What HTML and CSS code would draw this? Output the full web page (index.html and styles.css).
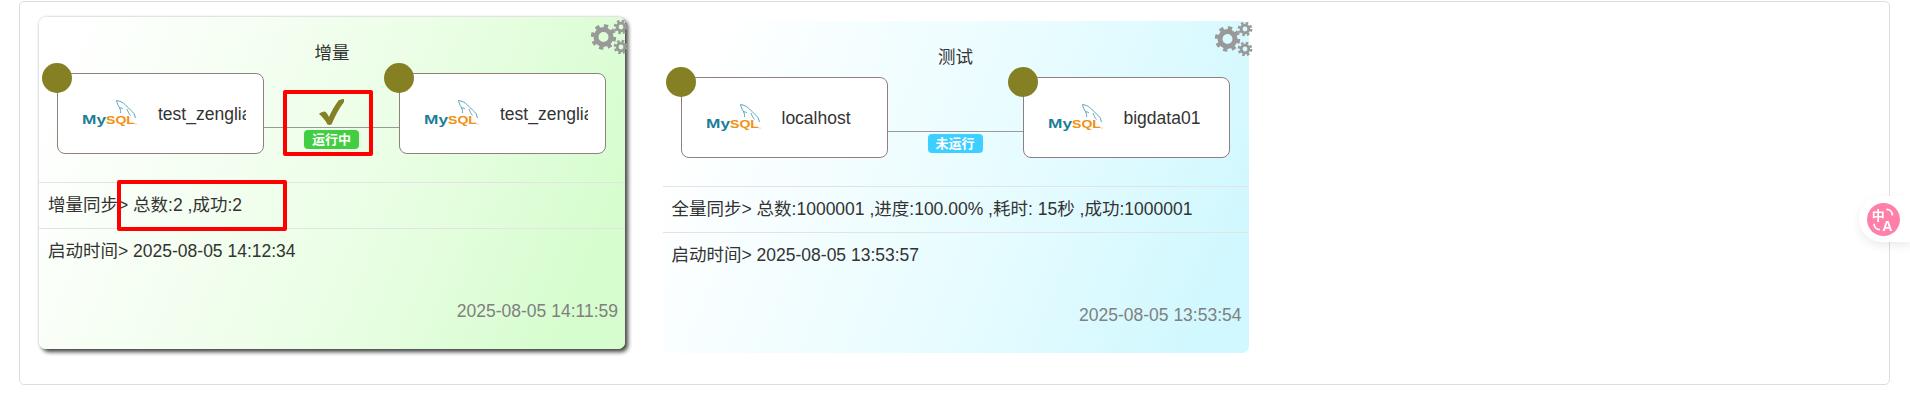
FILE: index.html
```html
<!DOCTYPE html>
<html lang="zh">
<head>
<meta charset="utf-8">
<title>任务</title>
<link rel="stylesheet" href="styles.css">
</head>
<body>
<svg class="defs" width="0" height="0" aria-hidden="true">
  <defs>
    <symbol id="mysql" viewBox="0 0 55 30">
      <path d="M34.500 1.500C35 4 36 6.500 37.500 8.500C38.500 10.500 38.700 12 38.500 14M34.500 1.500C38 2 41 3.500 43.500 6C45.500 8 47 9.500 48.500 11C50 12.500 51 13 52 14.500C52.500 16 53 17.500 53.500 19M45 10C46 12.500 47 15 48.500 16.500M37 9C38.500 8.500 40 9 41 10" fill="none" stroke="#4c9cb3" stroke-width=".9"/>
      <text class="logo-my" x="0" y="25" textLength="24" lengthAdjust="spacingAndGlyphs">My</text>
      <text class="logo-sql" x="24" y="25" textLength="29" lengthAdjust="spacingAndGlyphs">SQL</text>
      <circle cx="54" cy="25" r=".6" fill="#f29111"/>
    </symbol>
    <symbol id="cogs" viewBox="0 0 38 34">
      <g fill="none" stroke="#999">
        <circle cx="12.500" cy="17" r="7.500" stroke-width="5"/>
        <circle cx="12.500" cy="17" r="11" stroke-width="3.500" stroke-dasharray="4.300 4.340"/>
        <circle cx="30" cy="7" r="3.800" stroke-width="2.800"/>
        <circle cx="30" cy="7" r="6" stroke-width="2.600" stroke-dasharray="2.500 2.210"/>
        <circle cx="30" cy="27" r="3.800" stroke-width="2.800"/>
        <circle cx="30" cy="27" r="6" stroke-width="2.600" stroke-dasharray="2.500 2.210"/>
      </g>
    </symbol>
  </defs>
</svg>

<main class="panel">
  <section class="card card-green">
    <svg class="cogs"><use href="#cogs"/></svg>
    <h3 class="title">增量</h3>
    <div class="flow">
      <div class="node">
        <span class="dot"></span>
        <svg class="logo"><use href="#mysql"/></svg>
        <span class="name">test_zenglia</span>
      </div>
      <div class="link">
        <div class="link-top">
          <svg class="check" viewBox="0 0 25 26"><path d="M0 15C1.500 13.500 3.500 12.500 6 12.500C7.500 13.500 9 15.500 10 18C12.500 12 16 6 19.500 1.500C21 .5 23.500 0 25 0C25.500 1 25.500 2 25 3C20.500 9 16 17 12.500 25.500C11.500 26 9.500 26 8.500 25.500C6.500 21.500 3.500 18 0 15Z" fill="#858024"/></svg>
        </div>
        <span class="badge badge-run">运行中</span>
      </div>
      <div class="node">
        <span class="dot"></span>
        <svg class="logo"><use href="#mysql"/></svg>
        <span class="name">test_zenglia</span>
      </div>
    </div>
    <div class="row">增量同步&gt; 总数:2 ,成功:2</div>
    <div class="row">启动时间&gt; 2025-08-05 14:12:34</div>
    <div class="stamp">2025-08-05 14:11:59</div>
    <span class="mark mark-link"></span>
    <span class="mark mark-stat"></span>
  </section>

  <section class="card card-blue">
    <svg class="cogs"><use href="#cogs"/></svg>
    <h3 class="title">测试</h3>
    <div class="flow">
      <div class="node">
        <span class="dot"></span>
        <svg class="logo"><use href="#mysql"/></svg>
        <span class="name">localhost</span>
      </div>
      <div class="link">
        <div class="link-top"></div>
        <span class="badge badge-idle">未运行</span>
      </div>
      <div class="node">
        <span class="dot"></span>
        <svg class="logo"><use href="#mysql"/></svg>
        <span class="name">bigdata01</span>
      </div>
    </div>
    <div class="row">全量同步&gt; 总数:1000001 ,进度:100.00% ,耗时: 15秒 ,成功:1000001</div>
    <div class="row">启动时间&gt; 2025-08-05 13:53:57</div>
    <div class="stamp">2025-08-05 13:53:54</div>
  </section>
</main>

<aside class="translate">
  <svg class="translate-icon" viewBox="0 0 28 28">
    <circle cx="14" cy="14" r="14" fill="#ff80a9"/>
    <text class="t-zh" x="4" y="14.500">中</text>
    <text class="t-en" x="13" y="23.500">A</text>
    <path d="M16.500 5.500C19.500 5.500 21.500 7.500 21.500 10.500M6 17.500C6 20.500 8 22.500 11 22.500" fill="none" stroke="#fff" stroke-width="1.500"/>
  </svg>
</aside>
</body>
</html>
```
FILE: styles.css
```css
* { box-sizing: border-box; }
html, body { margin: 0; background: #fff; }
body {
  padding: 1px 20px 0 19px;
  height: 409px;
  overflow: hidden;
  font-family: "Liberation Sans", "Noto Sans CJK SC", sans-serif;
  font-size: 17.5px;
  color: #333;
}
.defs { position: absolute; }

.panel {
  display: flex;
  gap: 37.5px;
  height: 384px;
  padding: 19px;
  border: 1px solid #ddd;
  border-radius: 5px;
}

.card {
  position: relative;
  width: 586px;
  height: 332px;
  border-radius: 7px;
}
.card-green {
  transform: translateY(-4px);
  background: linear-gradient(112deg, #fff 5%, #ebfee6 55%, #d5fdcd 93%);
  box-shadow: 3px 3px 4px #444, 0 0 3px #ccc;
}
.card-blue {
  background: linear-gradient(112deg, #fff 8%, #e8fcff 55%, #d0f8fe 93%);
}

.cogs {
  position: absolute;
  top: 3px;
  left: 552px;
  width: 38px;
  height: 34px;
}
.card-blue .cogs { top: 1px; }

.title {
  height: 56px;
  margin: 0;
  padding-top: 24px;
  font-size: 17.5px;
  font-weight: 400;
  line-height: 24px;
  text-align: center;
}

.flow {
  display: flex;
  height: 81px;
  padding: 0 19px 0 18px;
}
.node {
  position: relative;
  display: flex;
  flex: none;
  align-items: center;
  gap: 21px;
  width: 207px;
  padding-left: 24px;
  background: #fff;
  border: 1px solid #917f7f;
  border-radius: 8px;
}
.dot {
  position: absolute;
  top: -11px;
  left: -16px;
  width: 30px;
  height: 30px;
  background: #858024;
  border-radius: 50%;
}
.logo { flex: none; width: 55px; height: 30px; }
.logo-my, .logo-sql {
  font-family: "Liberation Sans", sans-serif;
  font-size: 13px;
  font-weight: 700;
}
.logo-my { fill: #1d7e98; }
.logo-sql { fill: #f29111; font-size: 11px; }
.name {
  width: 88px;
  overflow: hidden;
  white-space: nowrap;
  line-height: 24px;
}

.link {
  display: flex;
  flex: 1;
  flex-direction: column;
  align-items: center;
}
.link-top {
  display: flex;
  align-self: stretch;
  justify-content: center;
  height: 55px;
  padding-top: 26px;
  border-bottom: 1px solid #999;
}
.check { width: 25px; height: 26px; }
.badge {
  width: 55px;
  height: 19px;
  margin-top: 2px;
  border-radius: 4px;
  color: #fff;
  font-size: 13px;
  font-weight: 700;
  line-height: 19px;
  text-align: center;
}
.badge-run { background: #43cd42; }
.badge-idle { background: #3ccfff; }

.row {
  height: 46px;
  padding: 0 9px;
  border-top: 1px solid #e3e3e3;
  line-height: 45px;
  white-space: nowrap;
}
.flow + .row { margin-top: 28px; }

.stamp {
  margin-top: 25px;
  padding-right: 7px;
  color: #808080;
  line-height: 24px;
  text-align: right;
}

.mark {
  position: absolute;
  border: 4px solid #f00;
  border-radius: 2px;
}
.mark-link { top: 73px; left: 244px; width: 90px; height: 66px; }
.mark-stat { top: 163px; left: 78px; width: 170px; height: 51px; }

.translate {
  position: fixed;
  top: 196px;
  right: 0;
  display: flex;
  align-items: center;
  width: 51px;
  height: 46px;
  padding-left: 8px;
  background: #fff;
  border-radius: 23px 0 0 23px;
  box-shadow: 0 4px 10px rgba(0, 0, 0, .08);
}
.translate-icon { flex: none; width: 33px; height: 33px; }
.t-zh, .t-en { fill: #fff; font-weight: 700; }
.t-zh { font-family: "Noto Sans CJK SC", sans-serif; font-size: 11px; }
.t-en { font-family: "Liberation Sans", sans-serif; font-size: 12px; }
```
